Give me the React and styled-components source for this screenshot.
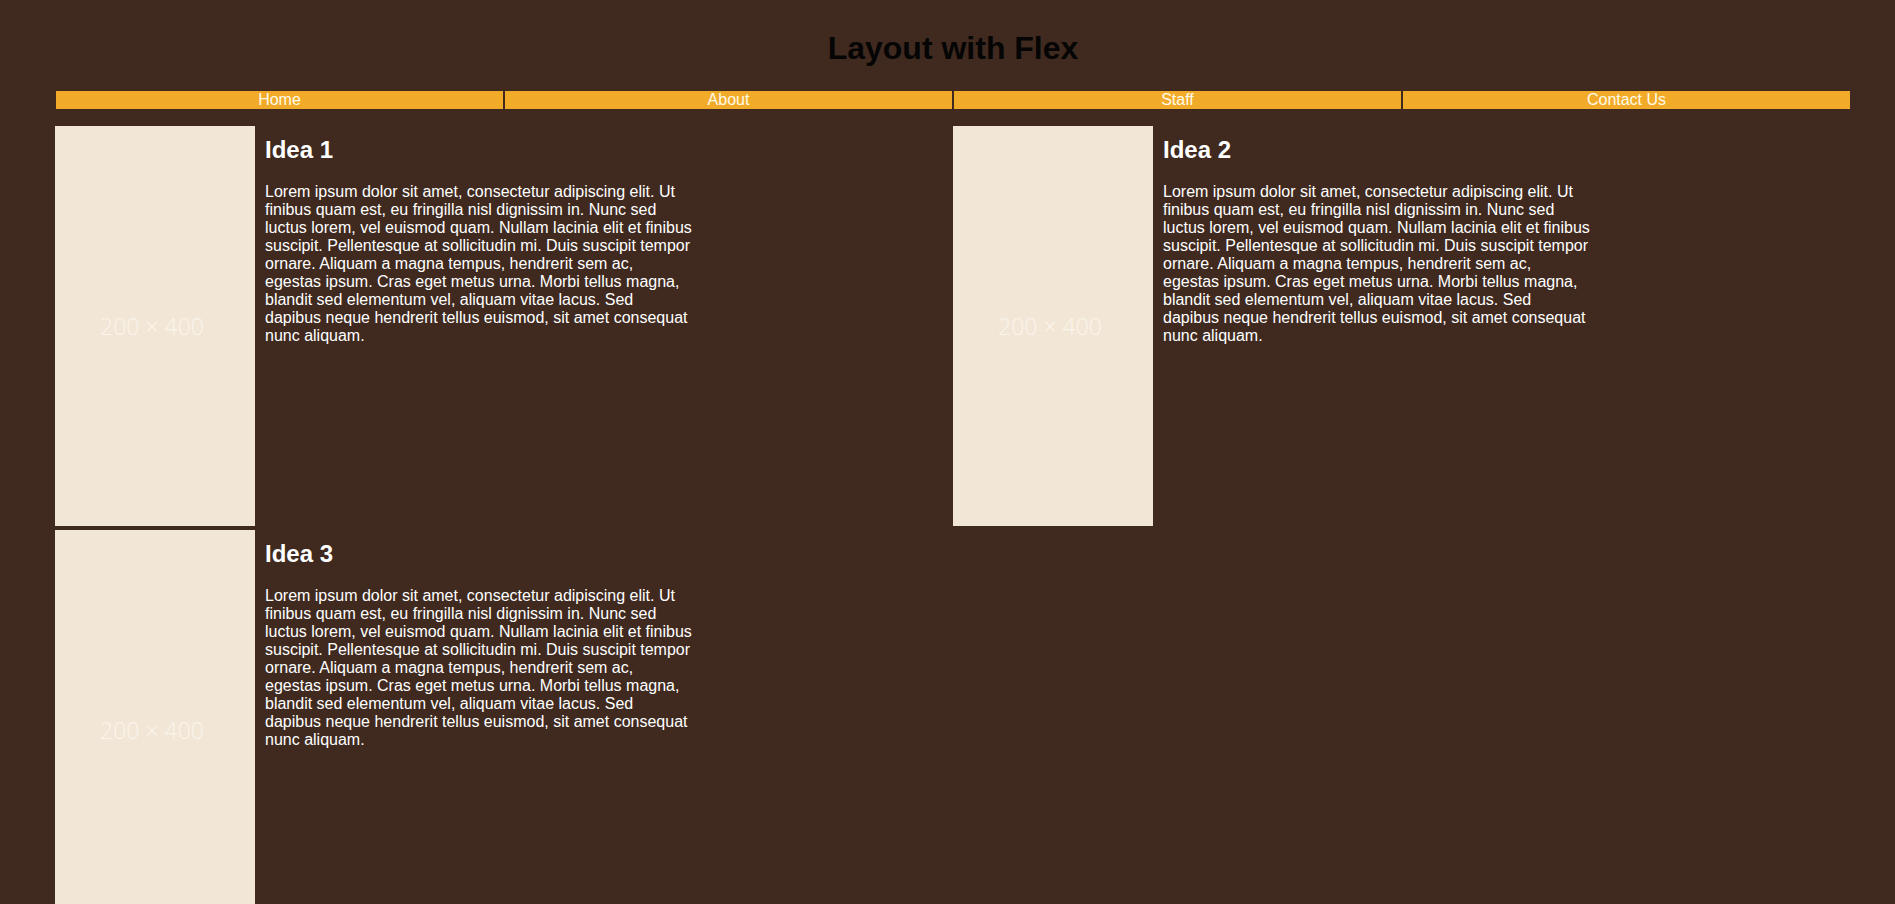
import React from 'react';
import styled, { createGlobalStyle } from 'styled-components';

const GlobalStyle = createGlobalStyle`
    body {
        margin: 0;
        background: #402a1f;
        font-family: "Liberation Sans", Arial, sans-serif;
    }
`

const Page = styled.div`
    width: 1796px;
    margin-left: 55px;
`

const Title = styled.h1`
    margin: 30px 0 23px;
    font-size: 32px;
    line-height: 37px;
    font-weight: 700;
    text-align: center;
    color: #050505;
`

const Nav = styled.nav`
    display: flex;
`

const NavItem = styled.a`
    flex: 1;
    border: 1px solid #402a1f;
    background: #f2ab28;
    color: #fffbe9;
    font-size: 16px;
    line-height: 18px;
    text-align: center;
    text-decoration: none;
`

const Ideas = styled.div`
    display: grid;
    grid-template-columns: 1fr 1fr;
    row-gap: 4px;
    margin-top: 16px;
`

const Card = styled.article`
    display: flex;
    align-items: flex-start;
`

const Thumb = styled.div`
    flex: 0 0 200px;
    height: 400px;
    box-sizing: border-box;
    padding-right: 6px;
    display: flex;
    align-items: center;
    justify-content: center;
    background: #f2e7d6;
    color: #faf5ec;
    font-family: "Open Sans", sans-serif;
    font-weight: 300;
    font-size: 23px;
`

const Body = styled.div`
    width: 427px;
    padding: 0 10px;
    color: #fff;
`

const Heading = styled.h2`
    margin: 10px 0 20px;
    font-size: 24px;
    line-height: 27px;
`

const Text = styled.p`
    margin: 0;
    font-size: 16px;
    line-height: 18px;
`

const lorem = 'Lorem ipsum dolor sit amet, consectetur adipiscing elit. Ut finibus quam est, eu fringilla nisl dignissim in. Nunc sed luctus lorem, vel euismod quam. Nullam lacinia elit et finibus suscipit. Pellentesque at sollicitudin mi. Duis suscipit tempor ornare. Aliquam a magna tempus, hendrerit sem ac, egestas ipsum. Cras eget metus urna. Morbi tellus magna, blandit sed elementum vel, aliquam vitae lacus. Sed dapibus neque hendrerit tellus euismod, sit amet consequat nunc aliquam.';

const links = ['Home', 'About', 'Staff', 'Contact Us'];
const ideas = ['Idea 1', 'Idea 2', 'Idea 3'];

const App = () => {
    return (
        <>
            <GlobalStyle/>
            <Page>
                <Title>Layout with Flex</Title>
                <Nav>
                    {links.map(link => <NavItem key={link} href="#">{link}</NavItem>)}
                </Nav>
                <Ideas>
                    {ideas.map(idea => (
                        <Card key={idea}>
                            <Thumb>200 × 400</Thumb>
                            <Body>
                                <Heading>{idea}</Heading>
                                <Text>{lorem}</Text>
                            </Body>
                        </Card>
                    ))}
                </Ideas>
            </Page>
        </>
    );
};

export default App;
